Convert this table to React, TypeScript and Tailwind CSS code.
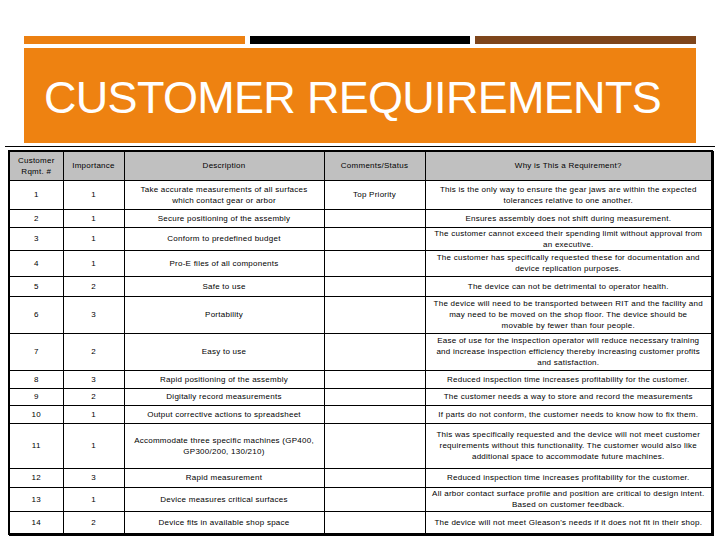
type Row = {
  id: string;
  imp: string;
  desc: string[];
  comment: string;
  why: string[];
  h: number;
};

const rows: Row[] = [
  {
    id: '1',
    imp: '1',
    desc: ['Take accurate measurements of all surfaces', 'which contact gear or arbor'],
    comment: 'Top Priority',
    why: ['This is the only way to ensure the gear jaws are within the expected', 'tolerances relative to one another.'],
    h: 29,
  },
  { id: '2', imp: '1', desc: ['Secure positioning of the assembly'], comment: '', why: ['Ensures assembly does not shift during measurement.'], h: 18 },
  {
    id: '3',
    imp: '1',
    desc: ['Conform to predefined budget'],
    comment: '',
    why: ['The customer cannot exceed their spending limit without approval from', 'an executive.'],
    h: 22,
  },
  {
    id: '4',
    imp: '1',
    desc: ['Pro-E files of all components'],
    comment: '',
    why: ['The customer has specifically requested these for documentation and', 'device replication purposes.'],
    h: 26,
  },
  { id: '5', imp: '2', desc: ['Safe to use'], comment: '', why: ['The device can not be detrimental to operator health.'], h: 20 },
  {
    id: '6',
    imp: '3',
    desc: ['Portability'],
    comment: '',
    why: [
      'The device will need to be transported between RIT and the facility and',
      'may need to be moved on the shop floor. The device should be',
      'movable by fewer than four people.',
    ],
    h: 37,
  },
  {
    id: '7',
    imp: '2',
    desc: ['Easy to use'],
    comment: '',
    why: [
      'Ease of use for the inspection operator will reduce necessary training',
      'and increase inspection efficiency thereby increasing customer profits',
      'and satisfaction.',
    ],
    h: 37,
  },
  { id: '8', imp: '3', desc: ['Rapid positioning of the assembly'], comment: '', why: ['Reduced inspection time increases profitability for the customer.'], h: 18 },
  { id: '9', imp: '2', desc: ['Digitally record measurements'], comment: '', why: ['The customer needs a way to store and record the measurements'], h: 17 },
  { id: '10', imp: '1', desc: ['Output corrective actions to spreadsheet'], comment: '', why: ['If parts do not conform, the customer needs to know how to fix them.'], h: 18 },
  {
    id: '11',
    imp: '1',
    desc: ['Accommodate three specific machines (GP400,', 'GP300/200, 130/210)'],
    comment: '',
    why: [
      'This was specifically requested and the device will not meet customer',
      'requirements without this functionality. The customer would also like',
      'additional space to accommodate future machines.',
    ],
    h: 45,
  },
  { id: '12', imp: '3', desc: ['Rapid measurement'], comment: '', why: ['Reduced inspection time increases profitability for the customer.'], h: 19 },
  {
    id: '13',
    imp: '1',
    desc: ['Device measures critical surfaces'],
    comment: '',
    why: ['All arbor contact surface profile and position are critical to design intent.', 'Based on customer feedback.'],
    h: 24,
  },
  { id: '14', imp: '2', desc: ['Device fits in available shop space'], comment: '', why: ["The device will not meet Gleason's needs if it does not fit in their shop."], h: 23 },
];

function Lines({ lines }: { lines: string[] }) {
  return (
    <>
      {lines.map((l, i) => (
        <div key={i} className="whitespace-nowrap">
          {l}
        </div>
      ))}
    </>
  );
}

const cell = 'border border-black p-0 text-center align-middle';

export default function App() {
  return (
    <div className="w-[720px] h-[540px] overflow-hidden bg-white font-['Liberation_Sans',Arial,sans-serif]">
      <div className="flex gap-[5px] px-[24px] pt-[36px]">
        <div className="h-[8px] flex-1 bg-[#ec8011]" />
        <div className="h-[8px] flex-1 bg-black" />
        <div className="h-[8px] flex-1 bg-[#7e451b]" />
      </div>

      <div className="mx-[24px] mt-[4px] h-[95px] bg-[#ee8211] pl-[20px] pt-[27px]">
        <h1 className="text-[45px] leading-[45px] tracking-[-0.7px] text-white">CUSTOMER REQUIREMENTS</h1>
      </div>

      <div className="mx-[5px] mt-[3px] h-px bg-black" />

      <table className="ml-[8px] mt-[3px] w-[703px] table-fixed border-collapse border-2 border-black text-[8px] leading-[11px] tracking-[0.25px] text-black shadow-[1px_1px_0_#000]">
        <colgroup>
          <col className="w-[54px]" />
          <col className="w-[61px]" />
          <col className="w-[200px]" />
          <col className="w-[101px]" />
          <col className="w-[287px]" />
        </colgroup>
        <thead>
          <tr className="h-[29px] bg-[#c0c0c0]">
            <th className={cell + ' font-normal'}>
              <div>Customer</div>
              <div>Rqmt. #</div>
            </th>
            <th className={cell + ' font-normal'}>Importance</th>
            <th className={cell + ' font-normal'}>Description</th>
            <th className={cell + ' font-normal'}>Comments/Status</th>
            <th className={cell + ' font-normal'}>Why is This a Requirement?</th>
          </tr>
        </thead>
        <tbody>
          {rows.map((r) => (
            <tr key={r.id} style={{ height: r.h }}>
              <td className={cell}>{r.id}</td>
              <td className={cell}>{r.imp}</td>
              <td className={cell}>
                <Lines lines={r.desc} />
              </td>
              <td className={cell}>{r.comment}</td>
              <td className={cell}>
                <Lines lines={r.why} />
              </td>
            </tr>
          ))}
        </tbody>
      </table>
    </div>
  );
}
